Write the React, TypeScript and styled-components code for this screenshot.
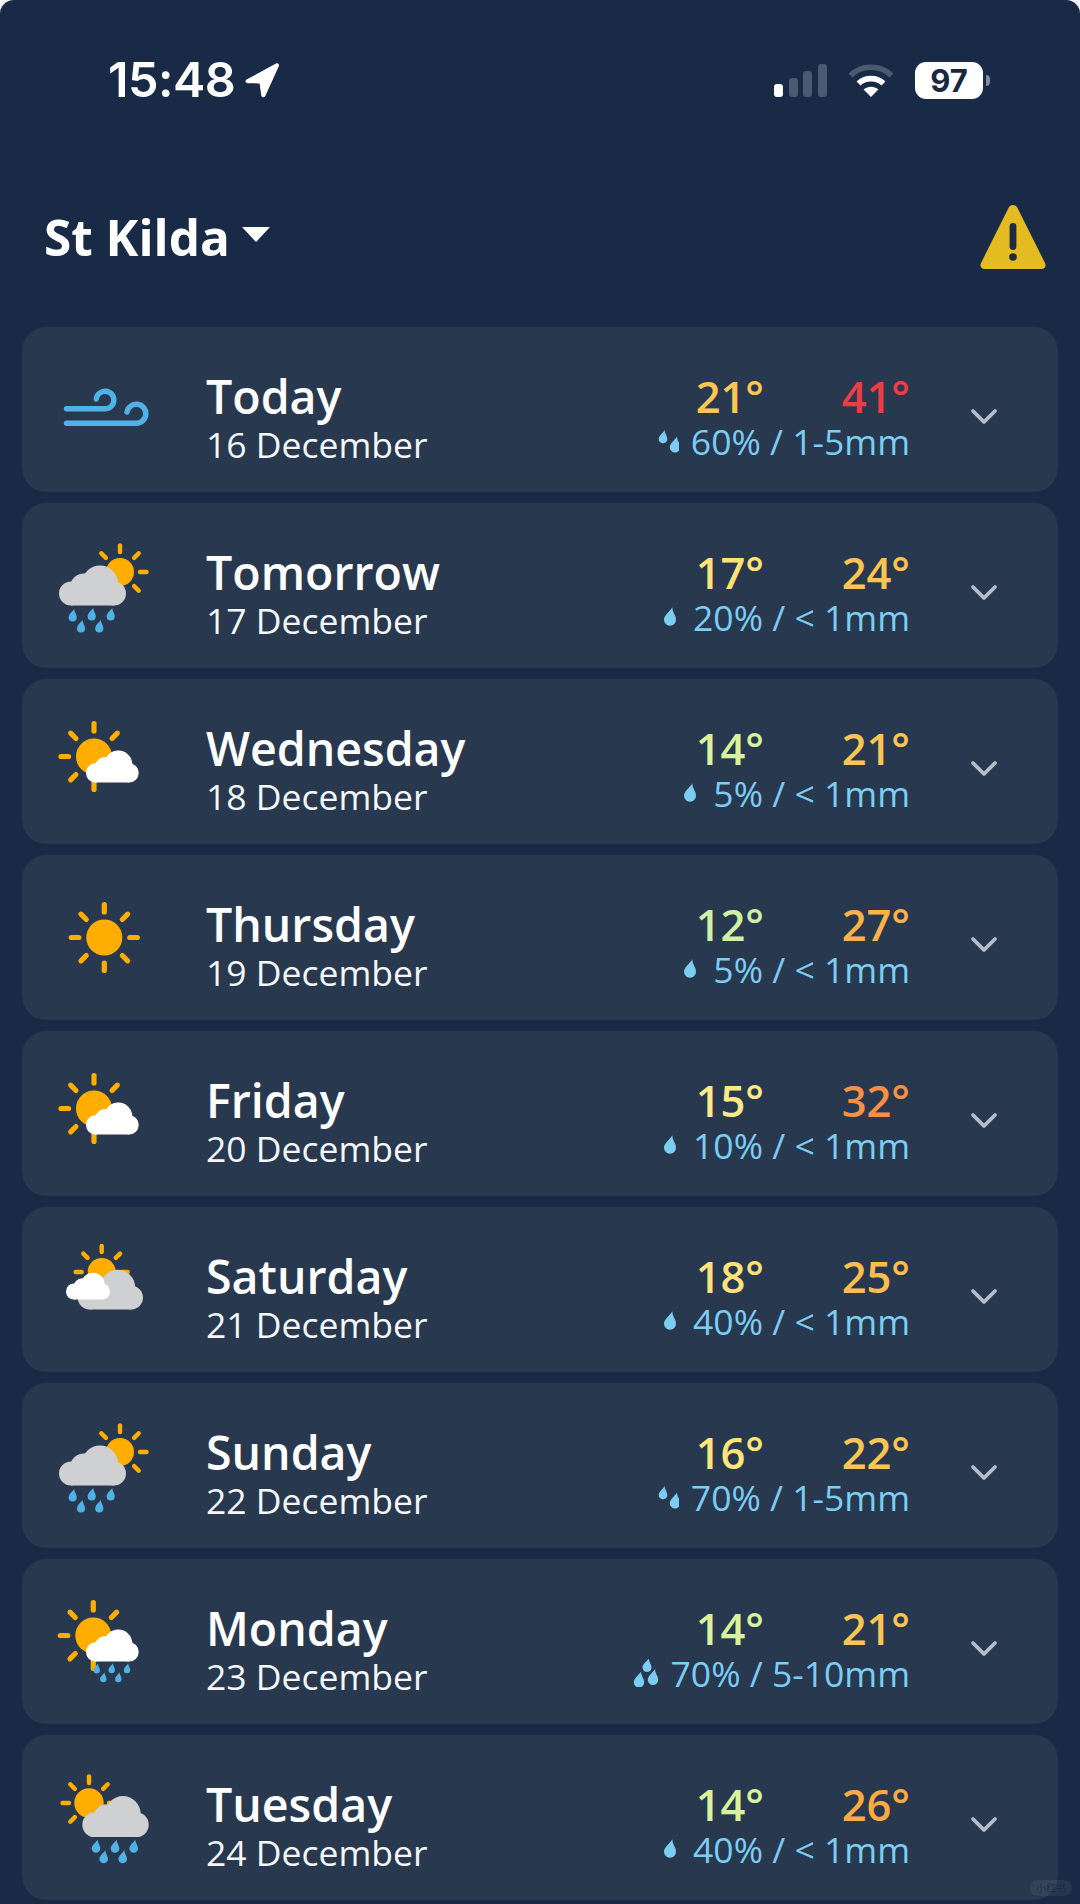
import React from "react";
import styled, { createGlobalStyle } from "styled-components";

const GlobalStyle = createGlobalStyle`
  html, body {
    margin: 0;
    padding: 0;
    background: #f4f5f6;
  }
  * {
    box-sizing: border-box;
  }
`;

const BLUE = "#4fb1e6";
const SUN = "#ffae00";
const GREY = "#cfd0d2";

interface Day {
  name: string;
  date: string;
  icon: keyof typeof icons;
  low: string;
  lowColor: string;
  high: string;
  highColor: string;
  drops: 1 | 2 | 3;
  rain: string;
}

function Sun(props: { x: number; y: number; r: number; inner: number; outer: number; angles: number[]; w: number }) {
  const { x, y, r, inner, outer, angles, w } = props;
  return (
    <g>
      <circle cx={x} cy={y} r={r} fill={SUN} />
      {angles.map((a) => {
        const rad = (a * Math.PI) / 180;
        return (
          <line
            key={a}
            x1={x + Math.cos(rad) * inner}
            y1={y + Math.sin(rad) * inner}
            x2={x + Math.cos(rad) * outer}
            y2={y + Math.sin(rad) * outer}
            stroke={SUN}
            strokeWidth={w}
            strokeLinecap="round"
          />
        );
      })}
    </g>
  );
}

function Cloud(props: { x: number; y: number; w: number; h: number; fill: string }) {
  const { x, y, w, h, fill } = props;
  return (
    <g transform={`translate(${x} ${y}) scale(${w / 67} ${h / 40})`} fill={fill}>
      <circle cx="12" cy="28" r="12" />
      <circle cx="25" cy="22" r="14" />
      <circle cx="41" cy="18" r="18" />
      <circle cx="55" cy="28" r="12" />
      <rect x="12" y="20" width="43" height="20" />
    </g>
  );
}

function Drop(props: { x: number; y: number; s?: number; fill?: string }) {
  const { x, y, s = 1, fill = BLUE } = props;
  return (
    <path
      transform={`translate(${x} ${y}) scale(${s})`}
      d="M1.8 -7C1.4 -3.6 4.3 -1.4 4.3 2A4.3 4.3 0 0 1 -4.3 2C-4.3 -1.2 -0.6 -3.6 1.8 -7Z"
      fill={fill}
    />
  );
}

const ALL_RAYS = [0, 45, 90, 135, 180, 225, 270, 315];

const icons = {
  wind: (
    <g fill="none" stroke={BLUE} strokeWidth="5.4" strokeLinecap="round">
      <path d="M11.5 43.8H50A8.8 8.8 0 1 0 41.3 34" />
      <path d="M11.5 58.2H81.5A9.5 9.5 0 1 0 72 47" />
    </g>
  ),
  rainSun: (
    <g>
      <Sun x={65} y={31} r={14} inner={20} outer={26.5} angles={[0, 45, 225, 270, 315]} w={4.4} />
      <Cloud x={4} y={24.5} w={67} h={40} fill={GREY} />
      <Drop x={17.7} y={74.5} s={0.95} />
      <Drop x={36.7} y={73.5} s={0.95} />
      <Drop x={55.7} y={73.5} s={0.95} />
      <Drop x={26} y={85.5} s={0.95} />
      <Drop x={44.3} y={85.5} s={0.95} />
    </g>
  ),
  sunCloud: (
    <g>
      <Sun x={39} y={39.5} r={18} inner={25.5} outer={33} angles={[90, 135, 180, 225, 270, 315]} w={5.2} />
      <Cloud x={31} y={33.5} w={52.7} h={32} fill="#fff" />
    </g>
  ),
  sun: <Sun x={49.3} y={44.5} r={18} inner={25.5} outer={33} angles={ALL_RAYS} w={5.2} />,
  cloudy: (
    <g>
      <Sun x={46.7} y={27} r={14} inner={20} outer={26} angles={[0, 180, 225, 270, 315]} w={4.4} />
      <Cloud x={22.7} y={24.8} w={65.3} h={39.7} fill={GREY} />
      <Cloud x={11} y={27.8} w={44} h={26.7} fill="#fff" />
    </g>
  ),
  sunShower: (
    <g>
      <Sun x={38.3} y={38.5} r={18} inner={25.5} outer={33} angles={[90, 135, 180, 225, 270, 315]} w={5.2} />
      <Cloud x={31} y={32.5} w={52.7} h={32} fill="#fff" />
      <Drop x={41.7} y={71.8} s={0.75} />
      <Drop x={56.7} y={71.5} s={0.75} />
      <Drop x={72} y={71.5} s={0.75} />
      <Drop x={48.3} y={80.5} s={0.75} />
      <Drop x={63.3} y={80.5} s={0.75} />
    </g>
  ),
  cloudShower: (
    <g>
      <Sun x={34} y={30} r={14.7} inner={20} outer={26.5} angles={[0, 135, 180, 225, 270, 315]} w={4.4} />
      <Cloud x={27.3} y={23} w={66.4} h={41} fill={GREY} />
      <Drop x={41} y={73.5} />
      <Drop x={60} y={73.5} />
      <Drop x={78.7} y={73.5} />
      <Drop x={48.7} y={84} />
      <Drop x={67.7} y={84} />
    </g>
  ),
};

const days: Day[] = [
  { name: "Today", date: "16 December", icon: "wind", low: "21°", lowColor: "#fdc652", high: "41°", highColor: "#ee3d45", drops: 2, rain: "60% / 1-5mm" },
  { name: "Tomorrow", date: "17 December", icon: "rainSun", low: "17°", lowColor: "#ffe377", high: "24°", highColor: "#fdc44f", drops: 1, rain: "20% / < 1mm" },
  { name: "Wednesday", date: "18 December", icon: "sunCloud", low: "14°", lowColor: "#d9f39c", high: "21°", highColor: "#fdc652", drops: 1, rain: "5% / < 1mm" },
  { name: "Thursday", date: "19 December", icon: "sun", low: "12°", lowColor: "#cff0a4", high: "27°", highColor: "#fdb249", drops: 1, rain: "5% / < 1mm" },
  { name: "Friday", date: "20 December", icon: "sunCloud", low: "15°", lowColor: "#fbea86", high: "32°", highColor: "#f98f45", drops: 1, rain: "10% / < 1mm" },
  { name: "Saturday", date: "21 December", icon: "cloudy", low: "18°", lowColor: "#ffe27a", high: "25°", highColor: "#fdbe4e", drops: 1, rain: "40% / < 1mm" },
  { name: "Sunday", date: "22 December", icon: "rainSun", low: "16°", lowColor: "#ffe677", high: "22°", highColor: "#fdc652", drops: 2, rain: "70% / 1-5mm" },
  { name: "Monday", date: "23 December", icon: "sunShower", low: "14°", lowColor: "#d9f39c", high: "21°", highColor: "#fdc652", drops: 3, rain: "70% / 5-10mm" },
  { name: "Tuesday", date: "24 December", icon: "cloudShower", low: "14°", lowColor: "#d9f39c", high: "26°", highColor: "#fbab42", drops: 1, rain: "40% / < 1mm" },
];

const DROP_LIGHT = "#7ccdf3";

function RainDrops(props: { count: 1 | 2 | 3 }) {
  const { count } = props;
  return (
    <DropsSvg viewBox="0 0 28 28">
      {count === 1 && <Drop x={17} y={14} s={1.4} fill={DROP_LIGHT} />}
      {count === 2 && (
        <g>
          <Drop x={12} y={10} s={1} fill={DROP_LIGHT} />
          <Drop x={24} y={18} s={1.2} fill={DROP_LIGHT} />
        </g>
      )}
      {count === 3 && (
        <g>
          <Drop x={16} y={6.5} s={1.05} fill={DROP_LIGHT} />
          <Drop x={8} y={21} s={1.2} fill={DROP_LIGHT} />
          <Drop x={22} y={18.5} s={1.2} fill={DROP_LIGHT} />
        </g>
      )}
    </DropsSvg>
  );
}

function DayCard(props: { day: Day }) {
  const { day } = props;
  return (
    <Card>
      <WeatherIcon viewBox="0 0 100 90">{icons[day.icon]}</WeatherIcon>
      <Titles>
        <DayName>{day.name}</DayName>
        <DateLine>{day.date}</DateLine>
      </Titles>
      <Forecast>
        <Temps>
          <Temp $color={day.lowColor}>{day.low}</Temp>
          <Temp $color={day.highColor}>{day.high}</Temp>
        </Temps>
        <Rain>
          <RainDrops count={day.drops} />
          <span>{day.rain}</span>
        </Rain>
      </Forecast>
      <Chevron viewBox="0 0 28 18">
        <polyline points="3,3 14,14 25,3" />
      </Chevron>
    </Card>
  );
}

function App() {
  return (
    <Screen>
      <GlobalStyle />
      <StatusBar>
        <TimeGroup>
          <Time>15:48</Time>
          <svg width="36" height="36" viewBox="0 0 36 36">
            <path
              d="M2.5 17.5L32 1.6C34 .7 35.6 2.4 34.8 4.3L21.3 34C20.3 36 17.6 35.6 17.3 33.6L15.6 21.4L3.6 21.2C1.4 21 .8 18.6 2.5 17.5Z"
              fill="#fff"
            />
          </svg>
        </TimeGroup>
        <StatusIcons>
          <Signal>
            <SignalBar $height={13} $on />
            <SignalBar $height={19} />
            <SignalBar $height={26} />
            <SignalBar $height={33} />
          </Signal>
          <svg width="46" height="34" viewBox="0 0 46 34">
            <g fill="none" strokeWidth="5.6">
              <path d="M2.5 12.5C13.5 1.5 32.5 1.5 43.5 12.5" stroke="#4a5a70" />
              <path d="M10.5 20.5C17 14 29 14 35.5 20.5" stroke="#fff" />
            </g>
            <path d="M15.6 26.6C20 22.8 26 22.8 30.4 26.6L23 34Z" fill="#fff" />
          </svg>
          <Battery>
            <BatteryBody>97</BatteryBody>
            <BatteryTip />
          </Battery>
        </StatusIcons>
      </StatusBar>
      <Header>
        <Location>
          <LocationName>St Kilda</LocationName>
          <Caret />
        </Location>
        <svg width="66" height="66" viewBox="0 0 66 66">
          <path
            d="M33 2C35 2 36.4 3 37.4 4.8L65 60C66.6 63.2 64.6 66 61.4 66H4.6C1.4 66 -.6 63.2 1 60L28.6 4.8C29.6 3 31 2 33 2Z"
            fill="#e5bb22"
          />
          <rect x="29.6" y="20" width="6.8" height="27" rx="3.4" fill="#1c2c42" />
          <circle cx="33" cy="54" r="3.8" fill="#1c2c42" />
        </svg>
      </Header>
      <Cards>
        {days.map((d) => (
          <DayCard key={d.name} day={d} />
        ))}
      </Cards>
      <Watermark>小红书</Watermark>
    </Screen>
  );
}

const Screen = styled.div`
  position: relative;
  width: 1080px;
  height: 1904px;
  overflow: hidden;
  background: #182a45;
  border-radius: 14px 14px 0 0;
  font-family: "Open Sans", "Noto Sans", sans-serif;
  color: #fff;
`;

const StatusBar = styled.div`
  display: flex;
  justify-content: space-between;
  align-items: center;
  height: 36px;
  margin-top: 62px;
  padding: 0 90px 0 108px;
`;

const TimeGroup = styled.div`
  display: flex;
  align-items: center;
  gap: 9px;
`;

const Time = styled.div`
  font-family: Inter, "Liberation Sans", sans-serif;
  font-size: 48.5px;
  font-weight: 600;
  line-height: 36px;
  letter-spacing: -0.5px;
`;

const StatusIcons = styled.div`
  display: flex;
  align-items: center;
  gap: 21px;
`;

const Signal = styled.div`
  display: flex;
  align-items: flex-end;
  gap: 5.6px;
  height: 34px;
`;

const SignalBar = styled.div<{ $height: number; $on?: boolean }>`
  width: 9px;
  height: ${(p) => p.$height}px;
  border-radius: 3px;
  background: ${(p) => (p.$on ? "#fff" : "#4a5a70")};
`;

const Battery = styled.div`
  display: flex;
  align-items: center;
  gap: 3px;
`;

const BatteryBody = styled.div`
  width: 68px;
  height: 37px;
  border-radius: 11px;
  background: #fff;
  color: #18293f;
  font-family: Inter, "Liberation Sans", sans-serif;
  font-size: 31px;
  font-weight: 700;
  line-height: 37px;
  text-align: center;
`;

const BatteryTip = styled.div`
  width: 4px;
  height: 11px;
  border-radius: 0 6px 6px 0;
  background: #7f8b9c;
`;

const Header = styled.div`
  display: flex;
  justify-content: space-between;
  align-items: flex-start;
  margin-top: 105px;
  padding: 0 34px 0 44px;
  height: 66px;
`;

const Location = styled.div`
  display: flex;
  align-items: center;
  gap: 12px;
  height: 68px;
`;

const LocationName = styled.div`
  font-size: 49.5px;
  font-weight: 700;
  line-height: 58px;
`;

const Caret = styled.div`
  width: 0;
  height: 0;
  border-left: 14px solid transparent;
  border-right: 14px solid transparent;
  border-top: 15px solid #fff;
  margin-top: -6px;
`;

const Cards = styled.div`
  display: flex;
  flex-direction: column;
  gap: 11px;
  margin-top: 58px;
  padding: 0 22px;
`;

const Card = styled.div`
  display: flex;
  align-items: center;
  height: 165px;
  padding: 0 60px 0 33px;
  border-radius: 24px;
  background: #28384f;
`;

const WeatherIcon = styled.svg`
  width: 100px;
  height: 90px;
  flex: none;
  overflow: visible;
`;

const Titles = styled.div`
  flex: 1;
  margin-left: 51px;
  margin-top: 16px;
`;

const DayName = styled.div`
  font-size: 46.5px;
  font-weight: 600;
  line-height: 53px;
`;

const DateLine = styled.div`
  font-size: 35.5px;
  font-weight: 400;
  line-height: 43px;
  color: #f4f6f8;
`;

const Forecast = styled.div`
  display: flex;
  flex-direction: column;
  align-items: flex-end;
  margin-top: 12px;
`;

const Temps = styled.div`
  display: grid;
  grid-template-columns: 146px 146px;
`;

const Temp = styled.div<{ $color: string }>`
  font-size: 43.5px;
  font-weight: 600;
  line-height: 52px;
  text-align: right;
  color: ${(p) => p.$color};
`;

const Rain = styled.div`
  display: flex;
  align-items: center;
  gap: 12px;
  margin-top: -2px;
  font-size: 35.5px;
  line-height: 40px;
  color: #7ccdf3;
`;

const DropsSvg = styled.svg`
  width: 28px;
  height: 28px;
  flex: none;
`;

const Chevron = styled.svg`
  width: 28px;
  height: 18px;
  flex: none;
  margin-left: 60px;
  margin-top: 14px;

  polyline {
    fill: none;
    stroke: #b9bcc4;
    stroke-width: 3.8;
    stroke-linecap: round;
    stroke-linejoin: round;
  }
`;

const Watermark = styled.div`
  position: absolute;
  right: 8px;
  bottom: 8px;
  padding: 0 6px;
  height: 16px;
  border-radius: 8px;
  background: rgba(255, 255, 255, 0.06);
  color: rgba(24, 42, 69, 0.8);
  font-family: "Noto Sans CJK SC", sans-serif;
  font-size: 10px;
  line-height: 16px;
`;

export default App;
